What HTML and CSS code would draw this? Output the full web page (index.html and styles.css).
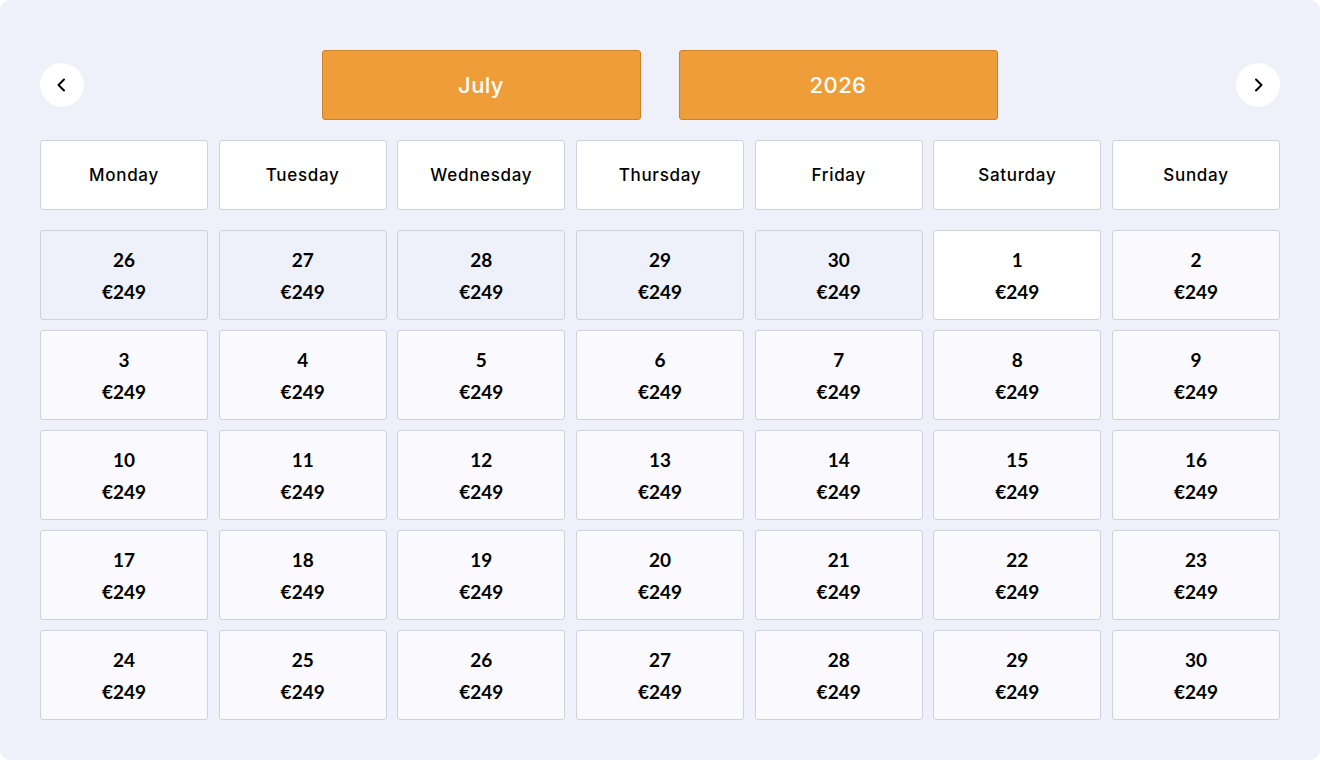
FILE: index.html
```html
<!DOCTYPE html>
<html lang="en">
<head>
<meta charset="utf-8">
<title>Calendar</title>
<link rel="stylesheet" href="styles.css">
</head>
<body>
<div class="page">
  <header class="head">
    <button class="nav" aria-label="Previous month">
      <svg width="16" height="16" viewBox="0 0 16 16"><path d="M10 2.5 L4.5 8 L10 13.5" fill="none" stroke="#000" stroke-width="2" stroke-linecap="round" stroke-linejoin="round"/></svg>
    </button>
    <div class="selectors">
      <div class="sel">July</div>
      <div class="sel">2026</div>
    </div>
    <button class="nav" aria-label="Next month">
      <svg width="16" height="16" viewBox="0 0 16 16"><path d="M6 2.5 L11.5 8 L6 13.5" fill="none" stroke="#000" stroke-width="2" stroke-linecap="round" stroke-linejoin="round"/></svg>
    </button>
  </header>

  <div class="weekdays">
    <div class="wd">Monday</div>
    <div class="wd">Tuesday</div>
    <div class="wd">Wednesday</div>
    <div class="wd">Thursday</div>
    <div class="wd">Friday</div>
    <div class="wd">Saturday</div>
    <div class="wd">Sunday</div>
  </div>

  <div class="days">
    <div class="day other"><span class="num">26</span><span class="price">€249</span></div>
    <div class="day other"><span class="num">27</span><span class="price">€249</span></div>
    <div class="day other"><span class="num">28</span><span class="price">€249</span></div>
    <div class="day other"><span class="num">29</span><span class="price">€249</span></div>
    <div class="day other"><span class="num">30</span><span class="price">€249</span></div>
    <div class="day today"><span class="num">1</span><span class="price">€249</span></div>
    <div class="day"><span class="num">2</span><span class="price">€249</span></div>
    <div class="day"><span class="num">3</span><span class="price">€249</span></div>
    <div class="day"><span class="num">4</span><span class="price">€249</span></div>
    <div class="day"><span class="num">5</span><span class="price">€249</span></div>
    <div class="day"><span class="num">6</span><span class="price">€249</span></div>
    <div class="day"><span class="num">7</span><span class="price">€249</span></div>
    <div class="day"><span class="num">8</span><span class="price">€249</span></div>
    <div class="day"><span class="num">9</span><span class="price">€249</span></div>
    <div class="day"><span class="num">10</span><span class="price">€249</span></div>
    <div class="day"><span class="num">11</span><span class="price">€249</span></div>
    <div class="day"><span class="num">12</span><span class="price">€249</span></div>
    <div class="day"><span class="num">13</span><span class="price">€249</span></div>
    <div class="day"><span class="num">14</span><span class="price">€249</span></div>
    <div class="day"><span class="num">15</span><span class="price">€249</span></div>
    <div class="day"><span class="num">16</span><span class="price">€249</span></div>
    <div class="day"><span class="num">17</span><span class="price">€249</span></div>
    <div class="day"><span class="num">18</span><span class="price">€249</span></div>
    <div class="day"><span class="num">19</span><span class="price">€249</span></div>
    <div class="day"><span class="num">20</span><span class="price">€249</span></div>
    <div class="day"><span class="num">21</span><span class="price">€249</span></div>
    <div class="day"><span class="num">22</span><span class="price">€249</span></div>
    <div class="day"><span class="num">23</span><span class="price">€249</span></div>
    <div class="day"><span class="num">24</span><span class="price">€249</span></div>
    <div class="day"><span class="num">25</span><span class="price">€249</span></div>
    <div class="day"><span class="num">26</span><span class="price">€249</span></div>
    <div class="day"><span class="num">27</span><span class="price">€249</span></div>
    <div class="day"><span class="num">28</span><span class="price">€249</span></div>
    <div class="day"><span class="num">29</span><span class="price">€249</span></div>
    <div class="day"><span class="num">30</span><span class="price">€249</span></div>
  </div>
</div>
</body>
</html>
```

FILE: styles.css
```css
* { box-sizing: border-box; }

html, body {
  margin: 0;
  background: #ffffff;
}

.page {
  width: 1320px;
  height: 760px;
  background: #eef1fa;
  border-radius: 10px;
  padding: 50px 40px 40px;
  font-family: Inter, "Noto Sans", sans-serif;
  color: #000;
}

.head {
  height: 70px;
  display: flex;
  align-items: center;
  justify-content: space-between;
}

.nav {
  width: 44px;
  height: 44px;
  border-radius: 50%;
  border: none;
  background: #ffffff;
  display: flex;
  align-items: center;
  justify-content: center;
  padding: 0;
  cursor: pointer;
}

.selectors {
  display: flex;
  gap: 38px;
  margin-right: 1px;
}

.sel {
  width: 319px;
  height: 70px;
  background: #ef9d38;
  border: 1px solid #c7822f;
  border-radius: 3px;
  color: #ffffff;
  font-family: Inter, "Noto Sans", sans-serif;
  font-weight: 500;
  font-size: 22px;
  letter-spacing: 0.4px;
  display: flex;
  align-items: center;
  justify-content: center;
}

.weekdays {
  margin-top: 20px;
  display: grid;
  grid-template-columns: repeat(7, 1fr);
  column-gap: 10.67px;
}

.wd {
  height: 70px;
  background: #ffffff;
  border: 1px solid #cfd2dc;
  border-radius: 3px;
  display: flex;
  align-items: center;
  justify-content: center;
  font-size: 17px;
  font-weight: 500;
  letter-spacing: 0.7px;
}

.days {
  margin-top: 20px;
  display: grid;
  grid-template-columns: repeat(7, 1fr);
  grid-auto-rows: 90px;
  column-gap: 10.67px;
  row-gap: 10px;
}

.day {
  background: #f9f9fe;
  border: 1px solid #cfd2dc;
  border-radius: 3px;
  display: flex;
  flex-direction: column;
  align-items: center;
  justify-content: center;
  gap: 10px;
  padding-top: 2px;
  font-family: Lato, "Noto Sans", sans-serif;
  font-weight: 700;
  font-size: 19px;
  line-height: 22px;
}

.day.other {
  background: #eef1fa;
}

.day.today {
  background: #ffffff;
}

.num, .price {
  display: block;
}
```
